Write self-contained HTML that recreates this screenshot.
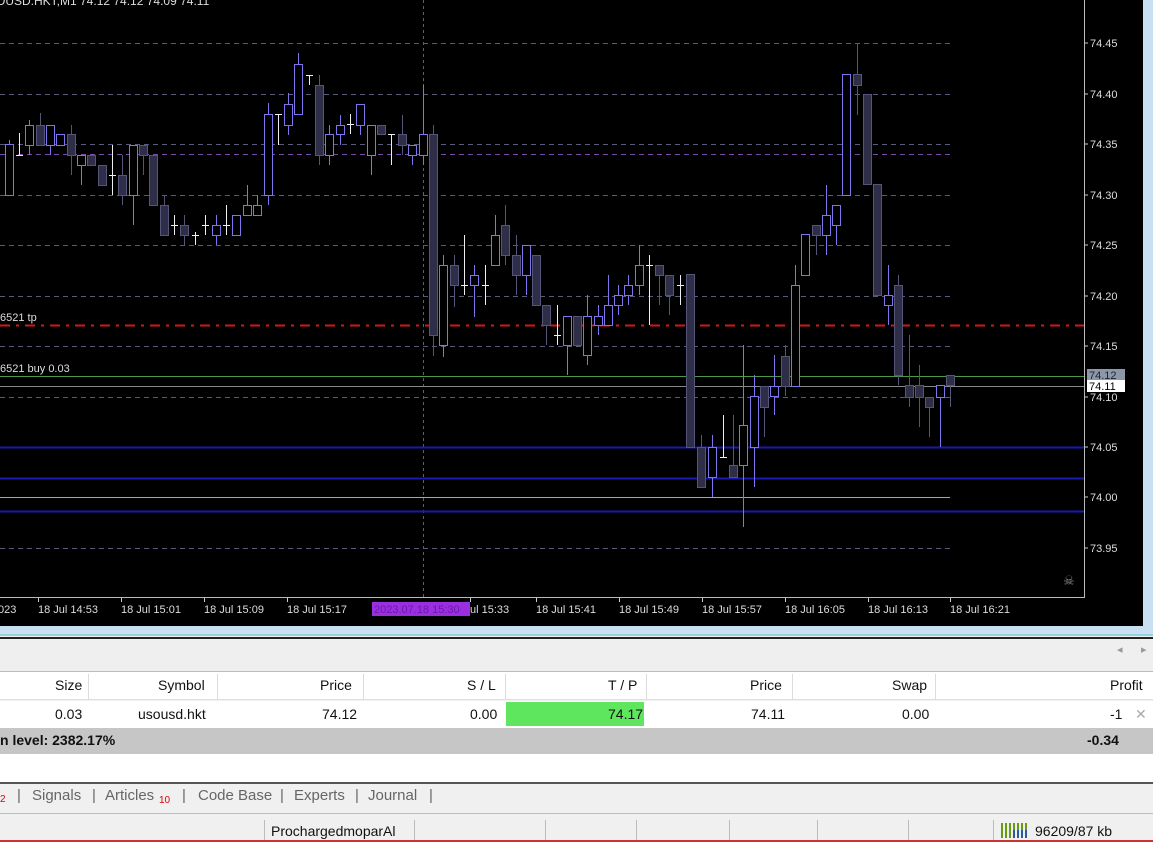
<!DOCTYPE html>
<html><head><meta charset="utf-8">
<style>
*{margin:0;padding:0;box-sizing:border-box}
body{width:1153px;height:842px;overflow:hidden;background:#f0f0f0;font-family:"Liberation Sans",sans-serif;position:relative}
.abs{position:absolute}
#chart{position:absolute;left:0;top:0;width:1143px;height:626px;background:#000}
.t{position:absolute;font-size:14px;color:#111;white-space:nowrap}
.hdr{position:absolute;top:672px;height:28px;left:0;width:1153px;background:#fff;border-bottom:1px solid #e0e0e0}
.sep{position:absolute;width:1px;background:#dcdcdc}
.tab{position:absolute;top:787px;font-size:15px;color:#666;white-space:nowrap}
</style></head><body>
<div id="chart"><svg id="svg" width="1143" height="626" style="position:absolute;left:0;top:0"></svg></div>
<div class="abs" style="left:1143px;top:0;width:10px;height:636px;background:#c9dff2"></div>
<div class="abs" style="left:0;top:626px;width:1153px;height:10px;background:#c9dff2"></div>
<div class="abs" style="left:0;top:634px;width:1153px;height:2px;background:#8fd3e0"></div>
<div class="abs" style="left:0;top:637px;width:1153px;height:2px;background:#222"></div>
<div class="abs" style="left:0;top:639px;width:1153px;height:33px;background:#efefef;border-bottom:1px solid #bbb"></div>
<div class="t" style="left:1117px;top:643px;color:#999;font-size:11px">◂</div>
<div class="t" style="left:1141px;top:643px;color:#999;font-size:11px">▸</div>
<div class="hdr"></div>
<div class="sep" style="left:88px;top:674px;height:26px"></div>
<div class="sep" style="left:217px;top:674px;height:26px"></div>
<div class="sep" style="left:363px;top:674px;height:26px"></div>
<div class="sep" style="left:505px;top:674px;height:26px"></div>
<div class="sep" style="left:646px;top:674px;height:26px"></div>
<div class="sep" style="left:792px;top:674px;height:26px"></div>
<div class="sep" style="left:935px;top:674px;height:26px"></div>
<div class="t" style="left:55px;top:677px">Size</div>
<div class="t" style="left:158px;top:677px">Symbol</div>
<div class="t" style="left:320px;top:677px">Price</div>
<div class="t" style="left:467px;top:677px">S / L</div>
<div class="t" style="left:608px;top:677px">T / P</div>
<div class="t" style="left:750px;top:677px">Price</div>
<div class="t" style="left:892px;top:677px">Swap</div>
<div class="t" style="left:1110px;top:677px">Profit</div>
<div class="abs" style="left:0;top:701px;width:1153px;height:27px;background:#fff"></div>
<div class="abs" style="left:506px;top:702px;width:138px;height:24px;background:#5ee65e"></div>
<div class="t" style="left:55px;top:706px">0.03</div>
<div class="t" style="left:138px;top:706px">usousd.hkt</div>
<div class="t" style="left:322px;top:706px">74.12</div>
<div class="t" style="left:470px;top:706px">0.00</div>
<div class="t" style="left:608px;top:706px">74.17</div>
<div class="t" style="left:751px;top:706px">74.11</div>
<div class="t" style="left:902px;top:706px">0.00</div>
<div class="t" style="left:1110px;top:706px">-1</div>
<div class="t" style="left:1135px;top:706px;color:#aaa">✕</div>
<div class="abs" style="left:0;top:728px;width:1153px;height:26px;background:#c6c6c6"></div>
<div class="t" style="left:0;top:732px;font-weight:bold">n level: 2382.17%</div>
<div class="t" style="left:1087px;top:732px;font-weight:bold">-0.34</div>
<div class="abs" style="left:0;top:754px;width:1153px;height:28px;background:#fff"></div>
<div class="abs" style="left:0;top:782px;width:1153px;height:2px;background:#555"></div>
<div class="abs" style="left:0;top:784px;width:1153px;height:30px;background:#f0f0f0;border-bottom:1px solid #bbb"></div>
<div class="tab" style="left:0;top:794px;color:#d00;font-size:10px">2</div>
<div class="tab" style="left:17px">|</div>
<div class="tab" style="left:32px">Signals</div>
<div class="tab" style="left:92px">|</div>
<div class="tab" style="left:105px">Articles</div>
<div class="tab" style="left:159px;top:795px;color:#d00;font-size:10px">10</div>
<div class="tab" style="left:182px">|</div>
<div class="tab" style="left:198px">Code Base</div>
<div class="tab" style="left:280px">|</div>
<div class="tab" style="left:294px">Experts</div>
<div class="tab" style="left:355px">|</div>
<div class="tab" style="left:368px">Journal</div>
<div class="tab" style="left:429px">|</div>
<div class="abs" style="left:0;top:815px;width:1153px;height:25px;background:#f0f0f0"></div>
<div class="sep" style="left:264px;top:820px;height:20px;background:#bbb"></div>
<div class="sep" style="left:414px;top:820px;height:20px;background:#bbb"></div>
<div class="sep" style="left:545px;top:820px;height:20px;background:#bbb"></div>
<div class="sep" style="left:636px;top:820px;height:20px;background:#bbb"></div>
<div class="sep" style="left:729px;top:820px;height:20px;background:#bbb"></div>
<div class="sep" style="left:817px;top:820px;height:20px;background:#bbb"></div>
<div class="sep" style="left:908px;top:820px;height:20px;background:#bbb"></div>
<div class="sep" style="left:993px;top:820px;height:20px;background:#bbb"></div>
<div class="t" style="left:271px;top:823px">ProchargedmoparAl</div>
<div class="abs" style="left:1001px;top:823px;width:28px;height:15px;background:repeating-linear-gradient(90deg,#6a9a10 0 2px,transparent 2px 4px)"></div>
<div class="abs" style="left:1013px;top:830px;width:16px;height:8px;background:repeating-linear-gradient(90deg,#2a5aa0 0 2px,transparent 2px 4px)"></div>
<div class="t" style="left:1035px;top:823px">96209/87 kb</div>
<div class="abs" style="left:0;top:840px;width:1153px;height:2px;background:#c33"></div>
<script>
var s='';
function L(x1,y1,x2,y2,c,w,d){s+='<line x1="'+x1+'" y1="'+y1+'" x2="'+x2+'" y2="'+y2+'" stroke="'+c+'" stroke-width="'+(w||1)+'"'+(d?' stroke-dasharray="'+d+'"':'')+'/>';}
function T(x,y,t,c,sz){s+='<text x="'+x+'" y="'+y+'" fill="'+(c||'#ddd')+'" font-size="'+(sz||11)+'" font-family="Liberation Sans,sans-serif">'+t+'</text>';}
var g=[43,94,144,195,245,296,346,397,447,497,548],pr=['74.45','74.40','74.35','74.30','74.25','74.20','74.15','74.10','74.05','74.00','73.95'];
g.forEach(function(y,i){L(0,y+.5,950,y+.5,'#5a5a7a',1,'5,4');L(1084,y,1088,y,'#ccc');T(1090,y+4,pr[i]);});
L(0,154.5,950,154.5,'#7a4aaa',1,'5,4');
L(423.5,0,423.5,598,'#6a4acc',1,'3,3');
L(0,325.5,1084,325.5,'#d01818',2,'10,6,3,6');
L(0,376.5,1084,376.5,'#4a9a4a');
L(0,386.5,1084,386.5,'#888');
L(0,447.5,1084,447.5,'#1a1ab0',2);
L(0,478.5,1084,478.5,'#1a1ab0',2);
L(0,497.5,950,497.5,'#e0a030');
L(0,511.5,1084,511.5,'#1a1ab0',2);
L(1084.5,0,1084.5,598,'#bbb');L(0,597.5,1084,597.5,'#bbb');
var C=[[9,195,144,140,195,'u'],[19,155,133,133,155,'w'],[29,145,125,120,155,'u'],[40,125,145,113,145,'d'],[50,145,125,125,155,'u'],[60,145,134,134,145,'u'],[71,134,155,125,175,'d'],[81,165,155,155,185,'u'],[91,155,165,155,165,'d'],[102,165,185,165,185,'d'],[112,175,175,145,195,'w'],[122,175,195,155,205,'d'],[133,195,145,145,225,'u'],[143,145,155,145,175,'d'],[153,155,205,155,205,'d'],[164,205,235,195,235,'d'],[174,225,225,215,235,'w'],[184,225,235,215,245,'d'],[195,235,235,232,245,'w'],[205,225,225,215,235,'w'],[216,235,225,215,245,'u'],[226,225,225,205,235,'w'],[236,235,215,215,235,'u'],[247,215,205,185,215,'u'],[257,215,205,195,215,'u'],[268,195,114,103,205,'u'],[278,114,114,114,145,'w'],[288,125,104,93,135,'u'],[298,114,64,53,114,'u'],[309,75,75,75,85,'w'],[319,85,155,75,165,'d'],[329,155,134,125,165,'u'],[340,134,125,115,145,'u'],[350,124,124,114,134,'w'],[360,125,104,104,135,'u'],[371,155,125,125,175,'u'],[381,125,134,125,134,'d'],[391,134,134,134,165,'w'],[402,134,145,115,155,'d'],[412,155,145,145,165,'u'],[423,155,134,85,165,'u'],[433,134,335,125,356,'d'],[443,345,265,255,357,'u'],[454,265,285,255,307,'d'],[464,285,285,235,295,'w'],[474,285,275,265,317,'u'],[485,285,285,265,305,'w'],[495,265,235,215,265,'u'],[505,225,255,205,265,'d'],[516,255,275,235,295,'d'],[526,275,245,245,295,'u'],[536,255,305,255,305,'d'],[546,305,325,305,345,'d'],[557,335,335,305,345,'w'],[567,345,316,316,375,'u'],[577,316,345,316,345,'d'],[587,355,316,295,365,'u'],[598,325,316,305,335,'u'],[608,325,305,275,325,'u'],[618,305,295,285,315,'u'],[628,295,285,275,305,'u'],[639,285,265,245,295,'u'],[649,265,265,255,325,'w'],[659,265,275,265,305,'d'],[669,275,295,275,315,'d'],[680,285,285,275,305,'w'],[690,274,447,274,447,'d'],[701,447,487,435,487,'d'],[712,477,447,435,497,'u'],[723,457,457,415,457,'w'],[733,465,477,415,477,'d'],[743,465,425,345,527,'u'],[754,447,396,375,487,'u'],[764,386,407,386,437,'d'],[774,396,386,355,415,'u'],[785,356,386,345,396,'d'],[795,386,285,265,386,'u'],[805,275,234,234,275,'u'],[816,225,235,225,255,'d'],[826,235,215,185,255,'u'],[836,225,205,205,245,'u'],[846,195,74,74,195,'u'],[857,74,85,43,115,'d'],[867,94,184,94,184,'d'],[877,184,295,184,295,'d'],[888,305,295,265,325,'u'],[898,285,375,275,385,'d'],[909,385,397,335,407,'d'],[919,385,397,365,427,'d'],[929,397,407,397,437,'d'],[940,397,385,385,447,'u'],[950,375,385,375,407,'d']];
C.forEach(function(c){var x=c[0],o=c[1],cl=c[2],h=c[3],l=c[4],k=c[5];
 if(k=='w'){L(x+.5,h,x+.5,l,'#eee');L(x-3,o+.5,x+4,o+.5,'#eee');return;}
 var col=k=='u'?'#7f74ec':'#55557a',fill=k=='u'?'#000':'#2e2e48';
 L(x+.5,h,x+.5,l,col);var top=Math.min(o,cl),bt=Math.max(o,cl);if(bt-top<3)bt=top+3;
 s+='<rect x="'+(x-3.5)+'" y="'+(top+.5)+'" width="8" height="'+(bt-top)+'" fill="'+fill+'" stroke="'+col+'"/>';});
T(-4,5,'OUSD.HKT,M1  74.12 74.12 74.09 74.11','#ddd',12);
T(0,321,'6521 tp','#ddd',11);T(0,372,'6521 buy 0.03','#ddd',11);
s+='<rect x="1087" y="369" width="38" height="12" fill="#8a98a8"/>';T(1089,379,'74.12','#223',11);
s+='<rect x="1087" y="380" width="38" height="12" fill="#fff"/>';T(1089,390,'74.11','#000',11);
var tl=[['023',-2],['18 Jul 14:53',38],['18 Jul 15:01',121],['18 Jul 15:09',204],['18 Jul 15:17',287],['ul 15:33',470],['18 Jul 15:41',536],['18 Jul 15:49',619],['18 Jul 16:05',785],['18 Jul 15:57',702],['18 Jul 16:13',868],['18 Jul 16:21',950]];
tl.forEach(function(a){L(a[1]+.5,598,a[1]+.5,602,'#ccc');T(a[1],613,a[0],'#ddd',11);});
s+='<rect x="372" y="602" width="98" height="14" fill="#9a2ee0"/>';T(374,613,'2023.07.18 15:30','#6a1aa8',11);
T(1063,585,'☠','#888',13);
document.getElementById('svg').innerHTML=s;
</script>
</body></html>
